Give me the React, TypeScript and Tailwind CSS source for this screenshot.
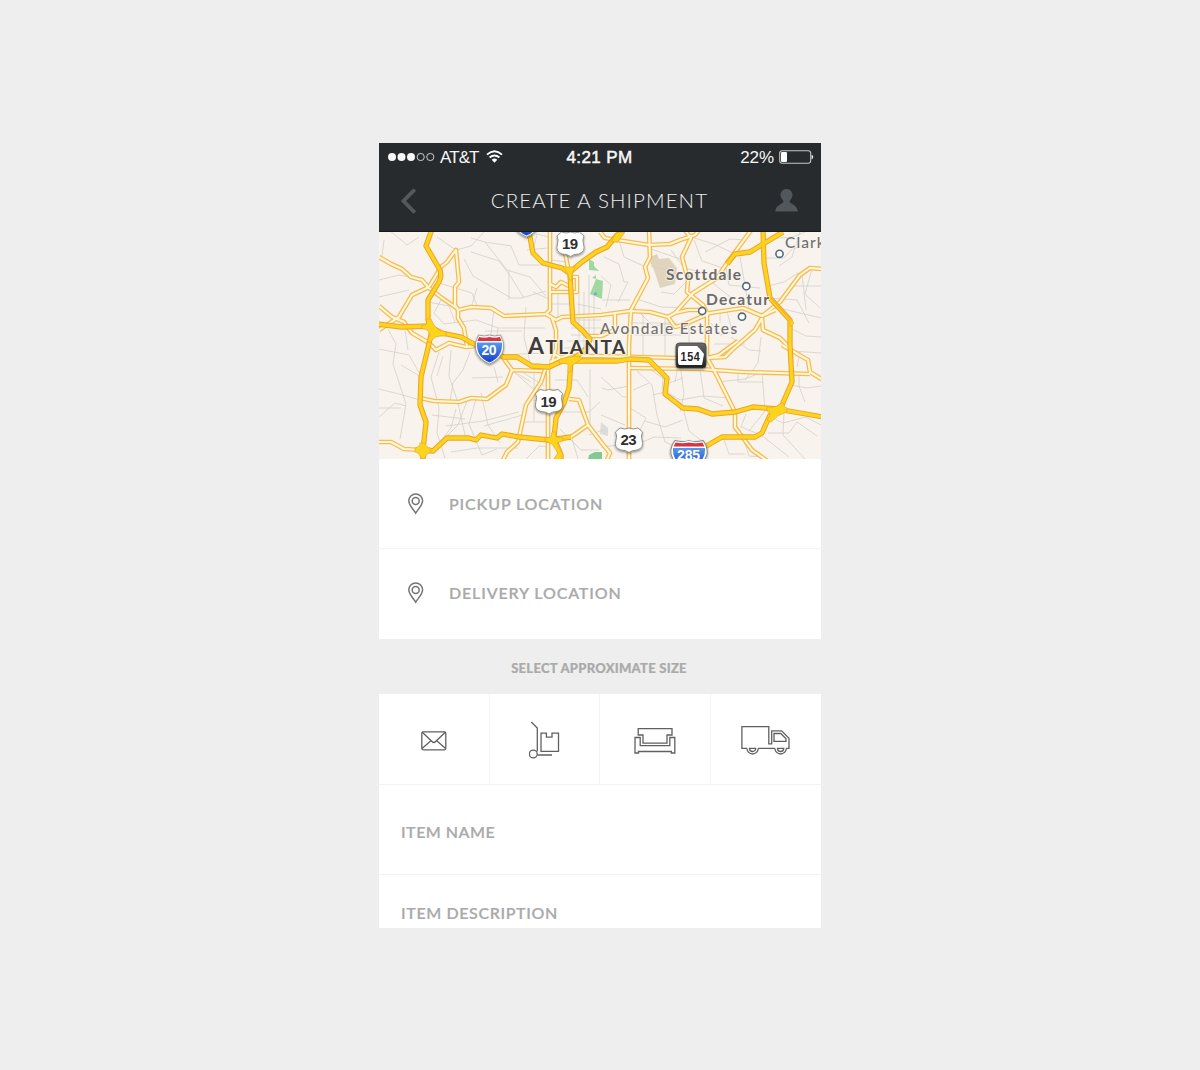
import React from 'react';

const highways = [
  'M53 -3L47 14L61 38Q63 45 60 50L49 68V88L53 98L49 116L42 145L41 173L47 190L44 218V230',
  'M-2 92L23 95L50 94L63 101L82 105L97 113L125 125H138L153 134L170 135L183 129L200 129H239L251 127L270 128L288 146L286 162L304 176L319 177L333 182L356 180L374 175L398 177L444 185',
  'M150 0L154 21L164 31L183 36L191 42L192 61L194 90L204 99L211 107L208 116L192 129L190 156L185 171L177 186L175 206L182 223V230',
  'M190 41L203 30L217 20L228 15L238 3L245 -3',
  'M44 218L54 219L68 206H90L97 208L102 203L118 206L123 202L140 205L170 208L192 205',
  'M384 -3L385 31L391 66L411 88L411 113L413 150L403 173L391 183L383 201L376 205H343L329 213L300 230',
  'M404 0L384 12L371 20L356 22L348 32',
];

const roads = [
  'M0 25L12 32L23 37L32 45L43 48L50 56L63 66L79 77',
  'M0 98L20 85L33 63L50 55L62 35L68 30L77 18L80 50L76 55V73L79 78V86L85 96L88 115',
  'M79 78L92 75L112 76L125 84L167 82L171 78V-3',
  'M167 82L177 88L183 85L222 83L251 79L271 80L289 85L296 95L304 93L331 81L364 76L383 84L401 70L421 43L431 36L444 37',
  'M0 74L13 85L25 90L33 101L50 111L57 118L70 111L87 115L97 114',
  'M122 123L133 138L163 139M133 138L127 153L108 167L92 166L80 170L55 169L41 166',
  'M167 135L162 150L147 173L139 210L128 220L123 230',
  'M169 134V230',
  'M173 86L177 98V116L172 134',
  'M184 127L175 122M197 120L171 130',
  'M190 167L200 168L209 193L192 205M209 193L222 210L231 221L227 230',
  'M0 210L12 210L25 217L43 218',
  'M171 60H198V45H191M171 52L177 55L182 50L190 54',
  'M190 41L187 25L182 12',
  'M221 0L226 6L238 8L270 13L291 12L301 8L316 3L321 -3',
  'M270 -3L271 25L266 35L269 46L252 78L250 113V230',
  'M305 -3L312 6L303 25L309 48L308 60L324 73L328 81V126L336 140L356 180V195L373 218L390 230',
  'M373 -3L348 31L338 46L314 61L296 81L289 85M296 81L309 78H324',
  'M396 78L383 84M376 98L353 118L346 125L329 126H298L221 124H200',
  'M383 86L384 98L401 106L411 116M376 98L383 86M403 113L429 128L431 140L444 148',
  'M251 136L321 137L364 140L431 142',
  'M211 104H222L236 98V81',
  'M328 126L340 123L359 109',
];

const streets = [
  'M10 -2L28 13L40 5M0 48L20 43L32 45M0 65L30 58M58 5L77 18L92 14L105 0M92 6L106 10L132 14L140 33H168',
  'M85 27L94 44L132 66H142L167 59M92 20L120 29L132 45L145 66M106 10L128 38L151 45L167 64',
  'M63 66L55 81L65 92L97 88L119 96H166M60 51L93 61L99 76M98 56L92 76M115 77L112 102L120 123L166 121',
  'M0 117L30 123L41 142M9 97L17 112L14 132L27 172L21 207M0 157L20 162L41 168M0 185L16 171L27 174',
  'M49 70L70 74L76 90M5 8L3 24M119 96L115 124M130 38V68M147 75L145 105L151 131M106 99L143 99',
  'M60 120L52 145L60 176L58 201L66 226M72 118L70 144L79 171L87 208M91 120L84 138L74 151L71 169',
  'M93 146L124 145M88 169L79 193L62 210M97 167L90 192L103 223M105 194L147 182M102 161L109 193L121 211',
  'M134 139L152 150M134 139L161 163M142 139L165 154M154 168L168 170M141 190L170 190M155 140V190M119 150L115 135',
  'M67 194L104 189L140 180M53 183L86 187M72 220L98 216L139 216M22 133L42 145M26 98L29 118',
  'M0 176L22 176M64 124L58 144M77 177L72 196L57 215M103 223L118 217M145 229L160 214L170 215',
  'M155 15L158 2L170 5M148 18L169 16M172 28L187 30M172 72H191M179 60V85M154 60L170 67M198 72L222 77',
  'M192 88H222M192 96H222M192 103H218M200 60V122M205 60V125M210 43V126M215 55V118M188 109H218M185 116H220',
  'M176 148H198L209 165M171 157L180 158M176 180H210L221 170M211 137V193M222 145L244 165H250M222 183L246 193',
  'M181 197L202 218H220M193 207L200 230M210 203L224 198M223 156L229 158L250 154M222 215L250 212',
  'M225 25L240 32L245 50H249L239 70M222 44L232 53L227 75M223 68H251M240 8L245 25L269 36',
  'M272 17L301 27M272 34L302 42M258 67L282 75L309 76M255 75L265 85L274 94L298 91',
  'M292 18L305 36L326 41M309 48L295 62L282 60M315 8L323 29L344 36M312 5L335 12L356 22',
  'M361 25L365 48L370 76M347 35L350 53L381 56M323 42L341 57L354 67M326 20L351 7L367 8',
  'M385 26H405L413 17L430 13M400 34L413 25L421 0M389 54L405 50L419 41M414 54H443M391 66L418 68L430 91',
  'M433 37L426 62L441 76M404 77L442 86M411 96L427 104L442 105M388 7L413 5L426 0M423 42L427 78',
  'M271 137L290 151L304 146M258 139L273 153L278 183L286 210L300 216M274 163L290 159M302 139L305 162L301 180',
  'M285 138L283 157L301 168L323 164L352 166M321 137L325 166L344 174M304 176L310 199L326 211',
  'M338 150L366 147L383 140L386 179L370 199M359 140V150H384M382 105L379 131L366 148M352 105L370 118L382 119',
  'M367 182L362 195L382 203L410 225M389 184L404 191L427 185L442 193M411 153L428 156L442 154M420 142V154L426 170',
  'M405 180L404 203L427 228M389 201L410 201L418 190L438 204M344 205L350 222L366 222M266 189L286 195L304 188',
  'M251 176L267 186L259 202M250 216L275 205L302 206M254 158L270 151M298 139L296 150M250 91H296M255 103H302M264 82V123M286 87V125M310 92V125',
  'M332 91L341 103L358 99M348 79L354 103M335 112H366M341 78V91M413 119L442 121M421 120L418 135M364 205L370 224L384 225',
];

function Roads() {
  return (
    <>
      <g fill="none" stroke="#d2cec7" strokeWidth=".75">
        {streets.map((d, i) => <path key={i} d={d} />)}
      </g>
      <g fill="none" strokeLinejoin="round">
        {roads.map((d, i) => <path key={i} d={d} stroke="#f7bb54" strokeWidth="4.7" />)}
        {roads.map((d, i) => <path key={i} d={d} stroke="#fff8d9" strokeWidth="2.1" />)}
        {highways.map((d, i) => <path key={i} d={d} stroke="#f0a02d" strokeWidth="5.3" />)}
        {highways.map((d, i) => <path key={i} d={d} stroke="#fbd51c" strokeWidth="3.3" />)}
      </g>
      <g fill="#fbd51c" stroke="#efa629" strokeWidth=".7">
        <path d="M47 87Q50 94 43 93V97Q49 96 51 103L48 110H52Q54 103 67 104V100Q56 99 52 87Z" />
        <path d="M41 211Q41 215 36 216V220Q40 220 42 226H46Q47 221 52 220V216Q47 216 46 211Z" />
        <path d="M402 171Q399 176 388 175V179Q394 180 388 188L392 190Q399 182 408 180V176Q404 175 405 171Z" />
        <path d="M184 35H196Q192 42 193 48H190Q190 41 184 35ZM181 127L196 124L204 126L192 134V140H189V132L180 131ZM173 200H177V205L184 206V209L178 211L184 223L182 228H174L179 221L173 212L166 209V206L172 205Z" />
        <path d="M391 65L411 86L415 91L411 95V88ZM232 10L237 1L246 0L239 10Z" />
      </g>
    </>
  );
}

function UsShield({ x, y, n }: { x: number; y: number; n: string }) {
  return (
    <g transform={`translate(${x} ${y})`}>
      <path d="M-9 -12Q-4 -10 0 -12Q4 -10 9 -12L13.5 -8Q11.5 -4 13 0Q15.5 8 8 10Q3 10 0 12.5Q-3 10 -8 10Q-15.5 8 -13 0Q-11.5 -4 -13.5 -8Z" fill="#fff" stroke="#8d8984" strokeWidth=".9" filter="url(#shadow)" />
      <text y="5" textAnchor="middle" fontFamily="Liberation Sans, sans-serif" fontWeight="700" fontSize="15" textLength="17" fill="#303030">{n}</text>
    </g>
  );
}

function Interstate({ x, y, n, wide = false }: { x: number; y: number; n?: string; wide?: boolean }) {
  return (
    <g transform={`translate(${x} ${y})`}>
      <g transform={wide ? 'scale(1.28 1)' : undefined}>
        <path d="M-11 -14Q-5 -12 0 -14Q5 -12 11 -14Q15 -7 14 0Q12 10 0 15Q-12 10 -14 0Q-15 -7 -11 -14Z" fill="#fff" stroke="#8d8984" strokeWidth=".8" filter="url(#shadow)" />
        <path d="M-10.5 -12Q-5 -10.5 0 -12Q5 -10.5 10.5 -12L12 -8H-12Z" fill="#da3341" />
        <path d="M-12.5 -6.5H12.5Q13.5 8 0 13.5Q-13.5 8 -12.5 -6.5Z" fill="url(#blue)" />
      </g>
      {n && <text y="5.5" textAnchor="middle" fontFamily="Liberation Sans, sans-serif" fontWeight="700" fontSize="14" textLength={wide ? 24 : 16} fill="#fff">{n}</text>}
    </g>
  );
}

function Place({ x, y, w, children, bold = false }: { x: number; y: number; w?: number; children: string; bold?: boolean }) {
  return (
    <text x={x} y={y} textLength={w} letterSpacing={w ? undefined : '1.1'} fontFamily="Lato, sans-serif" fontSize="15.5" fontWeight={bold ? 700 : 500} fill={bold ? '#6b6b6c' : '#707073'} stroke="#faf6ef" strokeOpacity=".75" strokeWidth="2" strokeLinejoin="round" paintOrder="stroke">
      {children}
    </text>
  );
}

function CityMap() {
  return (
    <svg className="block h-[227px] w-full shrink-0" viewBox="0 0 442 227">
      <defs>
        <linearGradient id="blue" x1="0" y1="0" x2="0" y2="1">
          <stop offset="0" stopColor="#559bea" />
          <stop offset="1" stopColor="#163fcf" />
        </linearGradient>
        <linearGradient id="sign" x1="0" y1="0" x2="0" y2="1">
          <stop offset="0" stopColor="#6a6a6a" />
          <stop offset="1" stopColor="#1e1e1e" />
        </linearGradient>
        <filter id="shadow" x="-30%" y="-30%" width="160%" height="170%">
          <feDropShadow dx="0" dy="1.2" stdDeviation="1" floodColor="#000" floodOpacity=".45" />
        </filter>
      </defs>
      <rect width="442" height="227" fill="#f8f4ed" />
      <path d="M210 27L215 30V34L220 39L210 38ZM217 47L224 49L223 67L211 62ZM213 46L217 43V47Z" fill="#9fd8a1" />
      <path d="M210 223L216 220H223V228H209Z" fill="#82cb90" />
      <path d="M269 26L278 22L280 27L290 26L298 36L296 52L281 56L275 38Z" fill="#e1d4bd" />
      <path d="M222 190L229 196V204L221 202Z" fill="#dddcda" />
      <Roads />
      <path d="M215 60.5h2.6v2.6h-2.6z" fill="#66add0" />
      <g fill="#fff" stroke="#55697e" strokeWidth="1.6">
        <circle cx="400.5" cy="21.8" r="3.6" />
        <circle cx="367.3" cy="54.2" r="3.6" />
        <circle cx="323.2" cy="79" r="3.6" />
        <circle cx="363" cy="84.7" r="3.6" />
      </g>
      <Place x={406} y={16}>Clark</Place>
      <Place x={287} y={48} w={76} bold>Scottdale</Place>
      <Place x={327} y={73} w={64} bold>Decatur</Place>
      <Place x={221} y={102} w={138}>Avondale Estates</Place>
      <text x="149" y="121.5" textLength="98" fontFamily="Lato, sans-serif" fontWeight="700" fontSize="19" fill="#3f3d3b" stroke="#fbf7f0" strokeOpacity=".7" strokeWidth="2.5" strokeLinejoin="round" paintOrder="stroke">
        <tspan fontSize="23">A</tspan>TLANTA
      </text>
      <Interstate x={147.5} y={-10} />
      <Interstate x={110.5} y={117} n="20" />
      <Interstate x={310} y={222.5} n="285" wide />
      <UsShield x={191.5} y={12} n="19" />
      <UsShield x={170} y={169.5} n="19" />
      <UsShield x={250} y={208} n="23" />
      <g filter="url(#shadow)">
        <rect x="297" y="111" width="30" height="25" rx="3.5" fill="url(#sign)" stroke="#444" strokeWidth=".8" />
        <path d="M301 114H318L321 117L325 122L323 133H301Q299 133 299 130V117Q299 114 301 114Z" fill="#fff" />
      </g>
      <text x="301.5" y="128.5" textLength="20" lengthAdjust="spacingAndGlyphs" fontFamily="Liberation Sans, sans-serif" fontWeight="700" fontSize="13" fill="#252525">154</text>
    </svg>
  );
}

function StatusBar() {
  return (
    <div className="flex h-[29px] items-center pl-[9px] pr-[7px] font-['Liberation_Sans',sans-serif] text-[17px] font-normal leading-none text-[#f7f7f7]">
      <div className="flex flex-1 items-center">
        <svg width="48" height="10" viewBox="0 0 48 10" className="-mt-0.5">
          <g fill="#f7f7f7"><circle cx="4" cy="5" r="4" /><circle cx="13.5" cy="5" r="4" /><circle cx="23" cy="5" r="4" /></g>
          <g fill="none" stroke="#dedede" strokeWidth=".9"><circle cx="32.7" cy="5" r="3.6" /><circle cx="42.3" cy="5" r="3.6" /></g>
        </svg>
        <span className="ml-1 tracking-[-0.9px]">AT&amp;T</span>
        <svg className="-mt-0.5 ml-[7px]" width="17" height="13" viewBox="0 0 17 13" fill="none" stroke="#fff" strokeWidth="1.9">
          <path d="M1 4.6Q8.5 -2 16 4.6M3.6 7.5Q8.5 3.3 13.4 7.5" />
          <path d="M5.7 9.7Q8.5 7.3 11.3 9.7L8.5 12.8Z" fill="#fff" stroke="none" />
        </svg>
      </div>
      <span className="mr-[3px] text-[17px] tracking-[0.4px] [-webkit-text-stroke:0.5px_#f7f7f7]">4:21 PM</span>
      <div className="flex flex-1 items-center justify-end">
        <span className="tracking-[-0.1px]">22%</span>
        <svg className="-mt-0.5 ml-[5px]" width="35" height="14" viewBox="0 0 35 14">
          <rect x=".7" y=".7" width="31" height="12.6" rx="2.5" fill="none" stroke="#c4c5c6" strokeWidth="1.1" />
          <rect x="2" y="2" width="6" height="10" rx="1" fill="#fff" />
          <path d="M32.6 4.5Q36 7 32.6 9.5Z" fill="#ededed" />
        </svg>
      </div>
    </div>
  );
}

function LocationRow({ children }: { children: string }) {
  return (
    <div className="flex items-center pl-[29px]">
      <svg width="16" height="22" viewBox="0 0 16 22" fill="none" stroke="#757575" strokeWidth="1.5">
        <path d="M7.7 20.2C5.5 16.4 .8 12.3 .8 7.8A6.9 6.9 0 0 1 14.6 7.8C14.6 12.3 9.8 16.4 7.7 20.2Z" />
        <circle cx="7.7" cy="7.9" r="3.5" />
      </svg>
      <span className="ml-[25px]">{children}</span>
    </div>
  );
}

const line = { fill: 'none', stroke: '#606060', strokeWidth: 1.3 };

function SizeOptions() {
  return (
    <div className="grid h-[91px] shrink-0 grid-cols-4 divide-x divide-[#f4f4f4] border-b border-[#f3f3f3]">
      <button aria-label="Envelope" className="flex items-center justify-center">
        <svg width="26" height="20" viewBox="0 0 26 20" className="mt-1" {...line}>
          <rect x=".8" y=".8" width="24" height="18" rx="1.5" />
          <path d="M1 1L11 10.5Q12.8 12.5 14.6 10.5L24.6 1M1 17.5L9.7 10M16 10L24.6 17.5" />
        </svg>
      </button>
      <button aria-label="Hand cart" className="flex items-center justify-center pl-0.5">
        <svg width="32" height="38" viewBox="0 0 32 38" className="mt-px" {...line}>
          <path d="M2.3 1L8.3 7V30.5M8.5 34H23" />
          <circle cx="4.3" cy="33" r="3.9" />
          <path d="M12 12.2H17.4V16.2H23V12.2H29.5V30.3H12Z" />
        </svg>
      </button>
      <button aria-label="Sofa" className="flex items-center justify-center">
        <svg width="42" height="28" viewBox="0 0 42 28" className="mt-1" {...line}>
          <path d="M4.2 1.7H38V8H33V16.1H9V8H4.2Z" />
          <path d="M1 10.5H6.2V18.7H35.8V10.5H40.8V26H37.3V24.5H4.5V26H1Z" />
        </svg>
      </button>
      <button aria-label="Truck" className="flex items-center justify-center">
        <svg width="49" height="31" viewBox="0 0 49 31" className="mt-[3px]" {...line}>
          <path d="M6 23.4H.9V1.7H27.8V18.8H30.7V5.8H40.6L48 13.3V23.4H45M34 23.4H17" />
          <path d="M33 8.5H39.8L45 13.8V16.4H33Z" />
          <path d="M6 23.4A5.6 5.6 0 0 0 17.2 23.4M34 23.4A5.6 5.6 0 0 0 45.2 23.4M8.5 23.4H14.7A3.1 3.1 0 0 1 8.5 23.4ZM36.5 23.4H42.7A3.1 3.1 0 0 1 36.5 23.4Z" />
        </svg>
      </button>
    </div>
  );
}

export default function App() {
  return (
    <main className="flex h-[1070px] justify-center bg-[#eeeeee] pt-[143px]">
      <section className="flex h-[785px] w-[442px] flex-col overflow-hidden bg-white font-[Lato,sans-serif] text-[16px] font-semibold leading-none tracking-[0.85px] text-[#aaaaaa] [-webkit-text-stroke:0.2px]">
        <header className="h-[89px] shrink-0 border-b border-[#171a1b] bg-[#272b2d] tracking-normal [-webkit-text-stroke:0]">
          <StatusBar />
          <div className="flex h-[58px] items-center justify-between pl-[22px] pr-[23px]">
            <button aria-label="Back"><svg width="16" height="26" viewBox="0 0 16 26" fill="none" stroke="#55595c" strokeWidth="3.8"><path d="M13.8 1.5L2.5 13L13.8 24.5" /></svg></button>
            <h1 className="-mt-0.5 ml-[7px] text-[20.5px] font-light tracking-[1.1px] text-[#eeeeee]">CREATE A SHIPMENT</h1>
            <button aria-label="Profile" className="-mt-0.5"><svg width="23" height="23" viewBox="0 0 23 23" fill="#51575b"><path d="M11.5 0C15 0 17.5 2.7 17.5 6.3C17.5 9 15.5 10.5 14.5 12.4C14.5 14.5 22.4 15.5 22.8 22.5H.2C.6 15.5 8.5 14.5 8.5 12.4C7.5 10.5 5.5 9 5.5 6.3C5.5 2.7 8 0 11.5 0Z" /></svg></button>
          </div>
        </header>
        <div className="shrink-0 [-webkit-text-stroke:0]"><CityMap /></div>
        <div className="grid h-[90px] shrink-0 border-b border-[#f3f3f3]"><LocationRow>PICKUP LOCATION</LocationRow></div>
        <div className="grid h-[90px] shrink-0 pb-0.5"><LocationRow>DELIVERY LOCATION</LocationRow></div>
        <h2 className="flex h-[55px] shrink-0 items-center justify-center bg-[#eeeeee] pr-0.5 pt-1 text-[13px] font-black tracking-[0.27px]">SELECT APPROXIMATE SIZE</h2>
        <SizeOptions />
        <div className="flex h-[90px] shrink-0 items-center border-b border-[#f3f3f3] pl-[22px] pt-1 tracking-[0.5px]">ITEM NAME</div>
        <div className="pl-[22px] pt-[30px] tracking-[0.62px]">ITEM DESCRIPTION</div>
      </section>
    </main>
  );
}
